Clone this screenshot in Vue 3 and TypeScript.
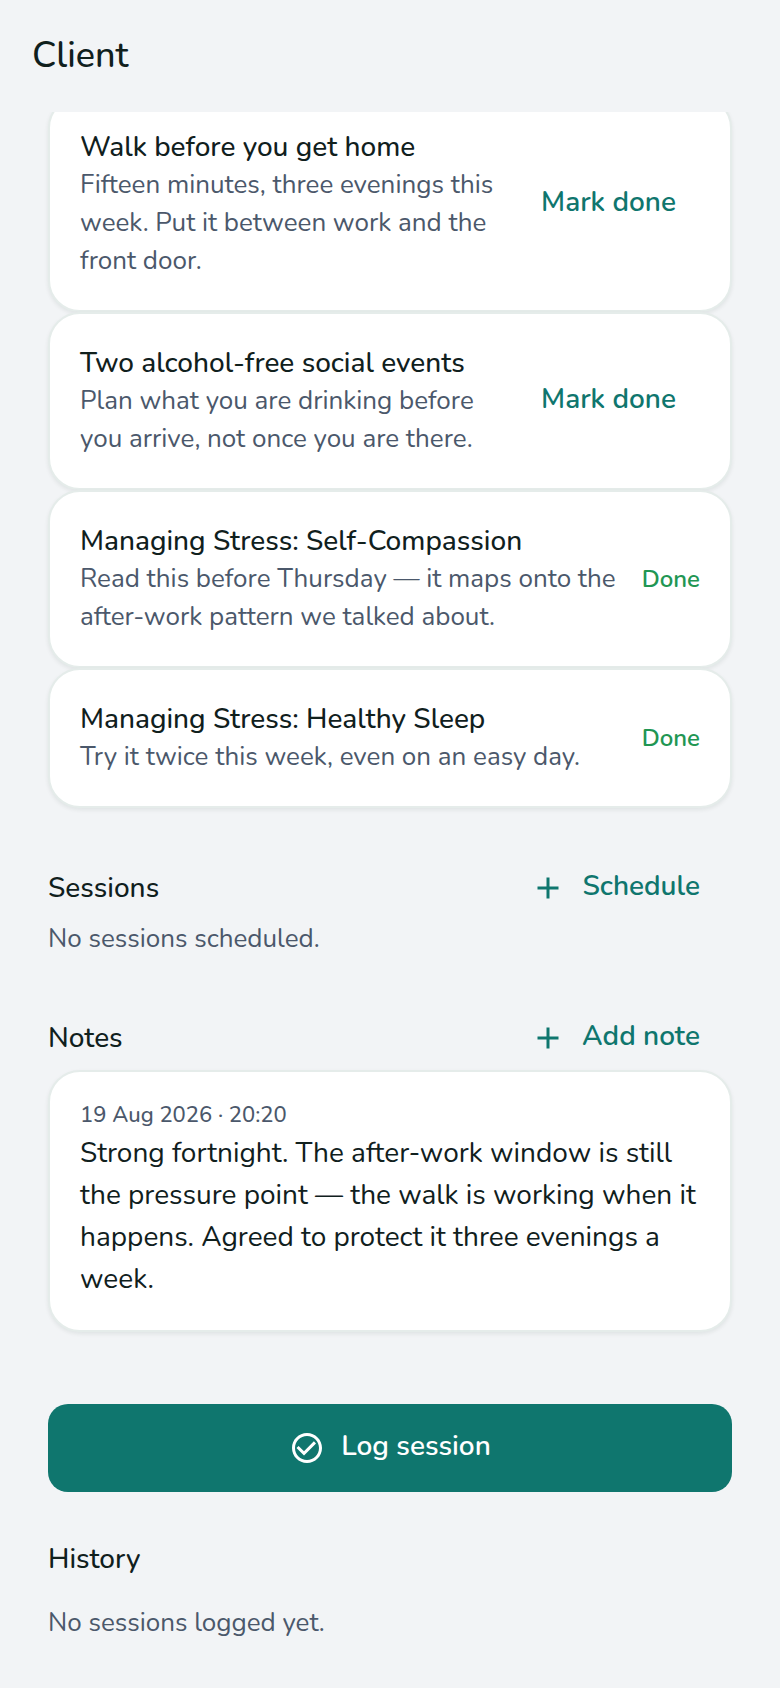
<script setup lang="ts">
import { ref } from 'vue'

interface Task {
  title: string
  detail: string
  done: boolean
}

interface Note {
  date: string
  text: string
}

const tasks = ref<Task[]>([
  {
    title: 'Walk before you get home',
    detail: 'Fifteen minutes, three evenings this week. Put it between work and the front door.',
    done: false,
  },
  {
    title: 'Two alcohol-free social events',
    detail: 'Plan what you are drinking before you arrive, not once you are there.',
    done: false,
  },
  {
    title: 'Managing Stress: Self-Compassion',
    detail: 'Read this before Thursday — it maps onto the after-work pattern we talked about.',
    done: true,
  },
  {
    title: 'Managing Stress: Healthy Sleep',
    detail: 'Try it twice this week, even on an easy day.',
    done: true,
  },
])

const notes: Note[] = [
  {
    date: '19 Aug 2026 · 20:20',
    text: 'Strong fortnight. The after-work window is still the pressure point — the walk is working when it happens. Agreed to protect it three evenings a week.',
  },
]
</script>

<template>
  <div class="page">
    <header class="bar">
      <h1>Client</h1>
    </header>
    <main class="content">
      <ul class="list">
        <li v-for="task in tasks" :key="task.title" class="card task">
          <div class="task-text">
            <h3>{{ task.title }}</h3>
            <p class="muted">{{ task.detail }}</p>
          </div>
          <span v-if="task.done" class="done">Done</span>
          <button v-else type="button" class="link mark" @click="task.done = true">
            <span class="label">Mark done</span>
          </button>
        </li>
      </ul>

      <section class="section">
        <div class="section-head">
          <h2>Sessions</h2>
          <button type="button" class="link">
            <svg class="icon" viewBox="0 0 24 24" aria-hidden="true">
              <path d="M19 13h-6v6h-2v-6H5v-2h6V5h2v6h6z" />
            </svg>
            <span class="label">Schedule</span>
          </button>
        </div>
        <p class="muted">No sessions scheduled.</p>
      </section>

      <section class="section">
        <div class="section-head">
          <h2>Notes</h2>
          <button type="button" class="link">
            <svg class="icon" viewBox="0 0 24 24" aria-hidden="true">
              <path d="M19 13h-6v6h-2v-6H5v-2h6V5h2v6h6z" />
            </svg>
            <span class="label">Add note</span>
          </button>
        </div>
        <article v-for="note in notes" :key="note.date" class="card">
          <p class="date">{{ note.date }}</p>
          <p class="note">{{ note.text }}</p>
        </article>
      </section>

      <button type="button" class="primary">
        <svg class="icon" viewBox="0 0 24 24" aria-hidden="true">
          <path
            d="M16.59 7.58 10 14.17l-3.59-3.58L5 12l5 5 8-8zM12 2C6.48 2 2 6.48 2 12s4.48 10 10 10 10-4.48 10-10S17.52 2 12 2zm0 18c-4.42 0-8-3.58-8-8s3.58-8 8-8 8 3.58 8 8-3.58 8-8 8z"
          />
        </svg>
        <span class="label">Log session</span>
      </button>

      <section class="history">
        <h2>History</h2>
        <p class="muted">No sessions logged yet.</p>
      </section>
    </main>
  </div>
</template>

<style>
body {
  margin: 0;
  background: #f2f4f6;
}
</style>

<style scoped>
.page {
  min-height: 100vh;
  background: #f2f4f6;
  color: #10201d;
  font-family: Nunito, Lato, 'Noto Sans', sans-serif;
  font-size: 28px;
  line-height: 42px;
}

h1,
h2,
h3,
p,
ul {
  margin: 0;
  padding: 0;
}

.bar {
  position: sticky;
  top: 0;
  z-index: 1;
  box-sizing: border-box;
  height: 112px;
  padding: 32px;
  background: #f2f4f6;
}

h1 {
  font-size: 36px;
  font-weight: 500;
  line-height: 48px;
}

h2 {
  font-size: 28px;
  font-weight: 500;
  line-height: 42px;
}

h3 {
  font-size: 28px;
  font-weight: 500;
  line-height: 38px;
}

/* The list is scrolled slightly under the title bar. */
.content {
  margin-top: -16px;
  padding: 0 48px 32px;
}

.list {
  list-style: none;
}

.card {
  padding: 30px;
  border: 2px solid #e5ecea;
  border-radius: 32px;
  background: #fff;
  box-shadow: 0 2px 4px rgba(16, 32, 29, 0.08);
}

.task {
  display: flex;
  align-items: center;
  gap: 24px;
}

.task-text {
  flex: 1;
  min-width: 0;
}

.muted {
  color: #4b586b;
  font-size: 26px;
  line-height: 38px;
}

.done {
  color: #219653;
  font-size: 24px;
  font-weight: 600;
  line-height: 34px;
}

.link,
.primary {
  display: flex;
  align-items: center;
  gap: 16px;
  border: 0;
  background: none;
  color: #0f766e;
  font: inherit;
  font-weight: 600;
  line-height: 36px;
  cursor: pointer;
}

.link {
  padding: 12px 32px 12px 24px;
}

.mark {
  padding: 20px 24px;
  margin-left: -24px;
}

.label {
  padding-bottom: 4px;
}

.icon {
  width: 36px;
  height: 36px;
  fill: currentColor;
}

.section {
  padding-top: 48px;
}

.section-head {
  display: flex;
  align-items: center;
  justify-content: space-between;
}

.date {
  margin-bottom: 4px;
  color: #4b586b;
  font-size: 22px;
  font-weight: 500;
  line-height: 26px;
}

.primary {
  justify-content: center;
  width: 100%;
  margin-top: 72px;
  padding: 24px;
  border-radius: 20px;
  background: #0f766e;
  color: #fff;
}

.history {
  display: grid;
  gap: 24px;
  padding-top: 46px;
}
</style>
